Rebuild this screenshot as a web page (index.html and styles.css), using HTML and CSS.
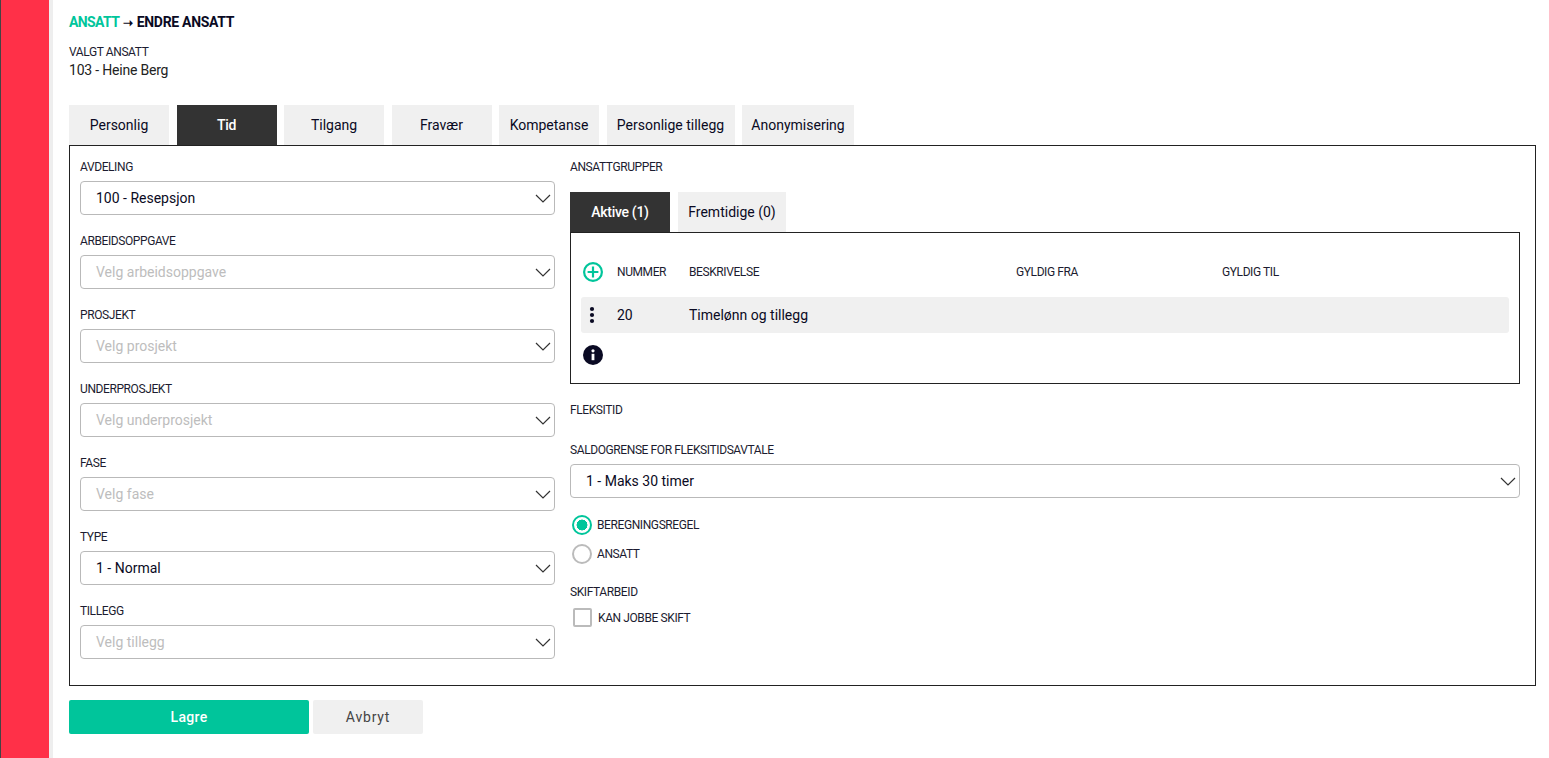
FILE: index.html
```html
<!DOCTYPE html>
<html>
<head>
    <title>Endre ansatt</title>
    <link rel="stylesheet" href="styles.css">
</head>
<body>
    <svg class="icon-defs" width="0" height="0">
        <symbol id="chevron" viewBox="0 0 16 9"><path d="M1 1l7 7 7-7" fill="none" stroke="#333" stroke-width="1.2"/></symbol>
    </svg>
    <div class="sidebar"></div>
    <div class="container">
        <h1 class="crumb"><span class="crumb-link">ANSATT</span> <span class="crumb-arrow">➝</span> ENDRE ANSATT</h1>
        <div class="label">VALGT ANSATT</div>
        <div class="selected">103 - Heine Berg</div>

        <div class="tabs">
            <div class="tab">Personlig</div>
            <div class="tab active">Tid</div>
            <div class="tab">Tilgang</div>
            <div class="tab">Fravær</div>
            <div class="tab">Kompetanse</div>
            <div class="tab tab-wide">Personlige tillegg</div>
            <div class="tab tab-anon">Anonymisering</div>
        </div>

        <div class="panel">
            <div class="left-col">
                <div class="label">AVDELING</div>
                <div class="select"><span>100 - Resepsjon</span><svg class="chevron"><use href="#chevron"/></svg></div>
                <div class="label">ARBEIDSOPPGAVE</div>
                <div class="select empty"><span>Velg arbeidsoppgave</span><svg class="chevron"><use href="#chevron"/></svg></div>
                <div class="label">PROSJEKT</div>
                <div class="select empty"><span>Velg prosjekt</span><svg class="chevron"><use href="#chevron"/></svg></div>
                <div class="label">UNDERPROSJEKT</div>
                <div class="select empty"><span>Velg underprosjekt</span><svg class="chevron"><use href="#chevron"/></svg></div>
                <div class="label">FASE</div>
                <div class="select empty"><span>Velg fase</span><svg class="chevron"><use href="#chevron"/></svg></div>
                <div class="label">TYPE</div>
                <div class="select"><span>1 - Normal</span><svg class="chevron"><use href="#chevron"/></svg></div>
                <div class="label">TILLEGG</div>
                <div class="select empty"><span>Velg tillegg</span><svg class="chevron"><use href="#chevron"/></svg></div>
            </div>

            <div class="right-col">
                <div class="label">ANSATTGRUPPER</div>
                <div class="tabs sub-tabs">
                    <div class="tab active">Aktive (1)</div>
                    <div class="tab tab-future">Fremtidige (0)</div>
                </div>
                <div class="group-box">
                    <div class="group-row group-head">
                        <svg class="round-icon" viewBox="0 0 20 20">
                            <circle cx="10" cy="10" r="8.9" fill="none" stroke="#00c59b" stroke-width="2.2"/>
                            <path d="M10 4.6v10.8M4.6 10h10.8" stroke="#00c59b" stroke-width="2.2"/>
                        </svg>
                        <div class="label">NUMMER</div>
                        <div class="label">BESKRIVELSE</div>
                        <div class="label">GYLDIG FRA</div>
                        <div class="label">GYLDIG TIL</div>
                    </div>
                    <div class="group-row group-item">
                        <svg class="round-icon" viewBox="0 0 20 20">
                            <circle cx="9" cy="4" r="2.1" fill="#0a0a23"/>
                            <circle cx="9" cy="10" r="2.1" fill="#0a0a23"/>
                            <circle cx="9" cy="16" r="2.1" fill="#0a0a23"/>
                        </svg>
                        <div>20</div>
                        <div>Timelønn og tillegg</div>
                        <div></div>
                        <div></div>
                    </div>
                    <svg class="round-icon info" viewBox="0 0 20 20">
                        <circle cx="10" cy="10" r="10" fill="#0a0a23"/>
                        <circle cx="10" cy="5.8" r="1.6" fill="#fff"/>
                        <rect x="8.6" y="8.8" width="2.8" height="6.4" fill="#fff"/>
                    </svg>
                </div>

                <div class="label flex-title">FLEKSITID</div>
                <div class="label flex-limit">SALDOGRENSE FOR FLEKSITIDSAVTALE</div>
                <div class="select"><span>1 - Maks 30 timer</span><svg class="chevron"><use href="#chevron"/></svg></div>

                <div class="radios">
                    <div class="option"><span class="radio checked"></span><span class="label">BEREGNINGSREGEL</span></div>
                    <div class="option"><span class="radio"></span><span class="label">ANSATT</span></div>
                </div>

                <div class="label shift-title">SKIFTARBEID</div>
                <div class="option shift-option"><span class="checkbox"></span><span class="label">KAN JOBBE SKIFT</span></div>
            </div>
        </div>

        <div class="actions">
            <button class="save-btn">Lagre</button>
            <button class="cancel-btn">Avbryt</button>
        </div>
    </div>
</body>
</html>
```

FILE: styles.css
```css
html, body {
    height: 100%;
}

body {
    font-family: Roboto, 'Noto Sans', sans-serif;
    font-size: 14px;
    color: #0a0a23;
    margin: 0;
    display: flex;
    overflow: hidden;
    background-color: white;
}

.icon-defs {
    position: absolute;
}

.sidebar {
    width: 48px;
    flex: none;
    background-color: #ff3048;
    border-left: 1px solid #444;
    border-right: 4px solid #eeeeee;
}

.container {
    flex: 1;
    padding: 14px 13px 0 16px;
}

.crumb {
    font-size: 14px;
    line-height: 16px;
    font-weight: 700;
    letter-spacing: -0.3px;
    margin: 0 0 13px;
}

.crumb-link {
    color: #00c59b;
    letter-spacing: -0.6px;
}

.crumb-arrow {
    font-size: 12px;
    letter-spacing: -1px;
    margin-right: 2px;
}

.label {
    font-size: 12px;
    line-height: 16px;
    letter-spacing: -0.4px;
    color: #1c1c30;
}

.selected {
    line-height: 18px;
    margin-top: 1px;
    color: #222;
    letter-spacing: -0.2px;
}

.tabs {
    display: flex;
    gap: 7.5px;
    margin-top: 26px;
}

.tab {
    width: 100px;
    height: 40px;
    line-height: 40px;
    text-align: center;
    background-color: #f0f0f0;
}

.tab.active {
    background-color: #333;
    color: white;
    font-weight: 500;
    letter-spacing: -0.3px;
}

.tab-wide {
    width: 128px;
}

.tab-anon {
    width: 112px;
}

.panel {
    display: grid;
    grid-template-columns: 475px 1fr;
    gap: 15px;
    border: 1px solid #222;
    padding: 13px 15px 26px 10px;
}

.left-col .label {
    margin-bottom: 6px;
}

.left-col .select {
    margin-bottom: 18px;
}

.left-col .select:last-child {
    margin-bottom: 0;
}

.select {
    display: flex;
    align-items: center;
    justify-content: space-between;
    box-sizing: border-box;
    height: 34px;
    padding: 0 3px 0 15px;
    border: 1px solid #b9b9b9;
    border-radius: 4px;
}

.select.empty {
    color: #bdbdbd;
}

.chevron {
    width: 16px;
    height: 9px;
}

.sub-tabs {
    margin-top: 17px;
    gap: 8px;
}

.tab-future {
    width: 108px;
}

.group-box {
    box-sizing: border-box;
    height: 152px;
    border: 1px solid #222;
    padding: 26px 10px 0;
}

.group-row {
    display: grid;
    grid-template-columns: 36px 72px 327px 206px 1fr;
    align-items: center;
}

.group-head {
    height: 26px;
    margin-bottom: 12px;
}

.group-item {
    height: 36px;
    background-color: #f0f0f0;
    border-radius: 3px;
    margin-bottom: 12px;
}

.round-icon {
    width: 20px;
    height: 20px;
    margin-left: 2px;
    display: block;
}

.flex-title {
    margin-top: 18px;
}

.flex-limit {
    margin-top: 24px;
    margin-bottom: 6px;
}

.radios {
    display: flex;
    flex-direction: column;
    gap: 9px;
    margin-top: 17px;
}

.option {
    display: flex;
    align-items: center;
    gap: 5px;
    padding-left: 2px;
}

.radio {
    box-sizing: border-box;
    width: 20px;
    height: 20px;
    border: 2.5px solid #bbb;
    border-radius: 50%;
}

.radio.checked {
    border-color: #00c59b;
    background: radial-gradient(circle, #00c59b 0 5.2px, white 5.7px);
}

.shift-title {
    margin-top: 20px;
}

.shift-option {
    margin-top: 8px;
    padding-left: 3px;
    gap: 6px;
}

.checkbox {
    box-sizing: border-box;
    width: 19px;
    height: 19px;
    border: 2px solid #bbb;
    border-radius: 2px;
}

.actions {
    display: flex;
    gap: 4px;
    margin-top: 14px;
}

button {
    height: 34px;
    border: none;
    border-radius: 2px;
    font-family: inherit;
    font-size: 14px;
    cursor: pointer;
}

.save-btn {
    width: 240px;
    background-color: #00c59b;
    color: white;
    font-weight: 500;
    letter-spacing: 0.3px;
}

.cancel-btn {
    width: 110px;
    background-color: #f0f0f0;
    color: #444;
    letter-spacing: 0.8px;
}
```
